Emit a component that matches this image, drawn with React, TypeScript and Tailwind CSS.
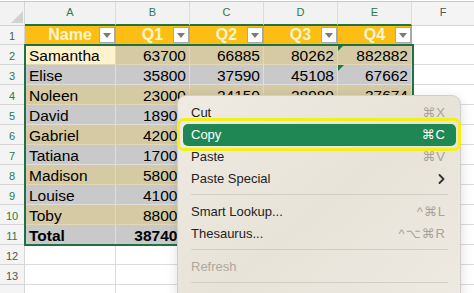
import React from 'react';

type Row = [string, number, number, number, number];

const data: Row[] = [
  ['Samantha', 63700, 66885, 80262, 882882],
  ['Elise', 35800, 37590, 45108, 67662],
  ['Noleen', 23000, 24150, 28980, 37674],
  ['David', 18900, 19845, 23814, 30958],
  ['Gabriel', 42000, 44100, 52920, 68796],
  ['Tatiana', 17000, 17850, 21420, 27846],
  ['Madison', 58000, 60900, 73080, 95004],
  ['Louise', 41000, 43050, 51660, 67158],
  ['Toby', 88000, 92400, 110880, 144144],
];

const total: Row = [
  'Total',
  data.reduce((s, r) => s + r[1], 0),
  data.reduce((s, r) => s + r[2], 0),
  data.reduce((s, r) => s + r[3], 0),
  data.reduce((s, r) => s + r[4], 0),
];

const colWidths = ['w-[91px]', 'w-[74px]', 'w-[74px]', 'w-[74px]', 'w-[74px]'];
const letters = ['A', 'B', 'C', 'D', 'E'];
const headers = ['Name', 'Q1', 'Q2', 'Q3', 'Q4'];

const font = { fontFamily: '"Liberation Sans", Arial, "DejaVu Sans", sans-serif' };

function RowHead({ n, selected }: { n?: number; selected?: boolean }) {
  return (
    <div
      className={`w-[25px] shrink-0 flex items-center justify-center pt-[3px] text-[11px] bg-[#f4f4f4] border-r border-b border-[#d6d6d6] ${
        selected ? 'text-[#2a7a4a]' : 'text-[#555]'
      }`}
    >
      {n}
    </div>
  );
}

function FilterButton() {
  return (
    <div className="absolute right-0 top-[1px] w-4 h-4 bg-white border border-[#a8a8a8] flex items-center justify-center">
      <svg width="8" height="5" viewBox="0 0 8 5">
        <path d="M0 0h8L4 5z" fill="#7a7a7a" />
      </svg>
    </div>
  );
}

function GreenMark() {
  return (
    <svg className="absolute left-0 top-0" width="6" height="6" viewBox="0 0 6 6">
      <path d="M0 0h6L0 6z" fill="#1f7a3e" />
    </svg>
  );
}

function DataRow({ row, index }: { row: Row; index: number }) {
  const tan = index % 2 === 0;
  const isTotal = row[0] === 'Total';
  const bg = tan ? 'bg-[#d5caa4]' : 'bg-[#c9c9c9]';
  const line = tan ? 'border-[#e2d8b3]' : 'border-[#dedede]';
  return (
    <div className="flex h-5">
      <RowHead n={index + 2} selected />
      {row.map((v, i) => (
        <div
          key={i}
          className={`relative shrink-0 flex items-end leading-[16px] text-[15.5px] text-black border-r border-b ${line} ${
            colWidths[i]
          } ${i === 0 ? 'justify-start pl-[4px]' : 'justify-end pr-[3px]'} ${
            index === 0 && i === 0 ? 'bg-[#fdf2cc]' : bg
          } ${isTotal ? 'font-bold' : ''}`}
        >
          {i === 4 && index < 2 && <GreenMark />}
          {v}
        </div>
      ))}
      <div className="flex-1 border-b border-[#dcdcdc] bg-white" />
    </div>
  );
}

function EmptyRow({ n }: { n?: number }) {
  return (
    <div className="flex h-5">
      <RowHead n={n} />
      {colWidths.map((w, i) => (
        <div key={i} className={`shrink-0 border-r border-b border-[#dcdcdc] bg-white ${w}`} />
      ))}
      <div className="flex-1 border-b border-[#dcdcdc] bg-white" />
    </div>
  );
}

function MenuItem({
  label,
  shortcut,
  active,
  disabled,
  submenu,
}: {
  label: string;
  shortcut?: string;
  active?: boolean;
  disabled?: boolean;
  submenu?: boolean;
}) {
  return (
    <div
      className={`h-[22px] flex items-center justify-between pl-[8px] pr-[10px] rounded-[5px] text-[13px] ${
        active ? 'bg-[#1f8754] text-white' : disabled ? 'text-[#aca89f]' : 'text-[#222]'
      }`}
    >
      <span>{label}</span>
      {shortcut && (
        <span
          className={`tracking-[1px] ${active ? 'text-white' : 'text-[#a6a39b]'}`}
          style={{ fontFamily: '"Liberation Sans", "DejaVu Sans", sans-serif' }}
        >
          {shortcut}
        </span>
      )}
      {submenu && (
        <svg width="7" height="10" viewBox="0 0 7 10" className="mr-[1px]">
          <path d="M1.5 1l4 4-4 4" fill="none" stroke="#333" strokeWidth="1.8" strokeLinecap="round" strokeLinejoin="round" />
        </svg>
      )}
    </div>
  );
}

function Separator() {
  return (
    <div className="h-[11px] pt-[4px] px-[8px]">
      <div className="h-px bg-[#d2cec5]" />
    </div>
  );
}

export default function App() {
  return (
    <div className="relative w-[474px] h-[293px] overflow-hidden bg-white select-none" style={font}>
      <div className="h-px bg-white" />
      <div className="h-px bg-[#c8c8c8]" />

      {/* column letters */}
      <div className="flex h-6">
        <div className="relative w-[25px] shrink-0 bg-[#f2f2f2] border-r border-b border-[#d6d6d6]">
          <svg className="absolute left-[11px] top-[9px]" width="12" height="12" viewBox="0 0 12 12">
            <path d="M0 12L12 0v12z" fill="#d2d2d2" />
          </svg>
        </div>
        {letters.map((l, i) => (
          <div
            key={l}
            className={`shrink-0 flex items-center justify-center pb-[2px] text-[11px] text-[#2a7a4a] bg-[#f2f2f2] border-r border-[#dcdcdc] border-b-2 border-b-[#217346] ${colWidths[i]}`}
          >
            {l}
          </div>
        ))}
        <div className="flex-1 flex items-center justify-center pb-[2px] text-[11px] text-[#555] bg-[#f4f4f4] border-b border-[#d6d6d6]">
          F
        </div>
      </div>

      {/* table header row */}
      <div className="flex h-[19px]">
        <RowHead n={1} />
        {headers.map((h, i) => (
          <div
            key={h}
            className={`relative shrink-0 flex items-end justify-center leading-[18px] text-[16px] font-bold text-[#fdf5cc] bg-[#fcbe14] border-r border-b border-[#e0aa10] ${colWidths[i]}`}
          >
            {h}
            <FilterButton />
          </div>
        ))}
        <div className="flex-1 border-b border-[#dcdcdc] bg-white" />
      </div>

      {data.map((r, i) => (
        <DataRow key={r[0]} row={r} index={i} />
      ))}
      <DataRow row={total} index={9} />
      <EmptyRow n={12} />
      <EmptyRow n={13} />
      <EmptyRow />

      {/* selection border */}
      <div className="absolute left-[24px] top-[44px] w-[390px] h-[202px] border-2 border-[#1f7145] pointer-events-none" />

      {/* context menu */}
      <div className="absolute left-[177px] top-[95px] w-[284px] h-[230px] rounded-[9px] border border-[#d3cfc6] bg-linear-to-br from-[#efebe3] via-[#e8e3d8] to-[#eeebe4] shadow-[0_3px_12px_rgba(0,0,0,0.14)]">
        <div className="flex flex-col pt-[6px] pl-[5px] pr-[4px]">
          <MenuItem label="Cut" shortcut="⌘X" />
          <MenuItem label="Copy" shortcut="⌘C" active />
          <MenuItem label="Paste" shortcut="⌘V" />
          <MenuItem label="Paste Special" submenu />
          <Separator />
          <MenuItem label="Smart Lookup..." shortcut="^⌘L" />
          <MenuItem label="Thesaurus..." shortcut="^⌥⌘R" />
          <Separator />
          <MenuItem label="Refresh" disabled />
          <Separator />
        </div>
        <div className="absolute -left-px top-[22px] w-[284px] h-[33px] rounded-[7px] border-[3px] border-[#f2ef1a]" />
      </div>
    </div>
  );
}
